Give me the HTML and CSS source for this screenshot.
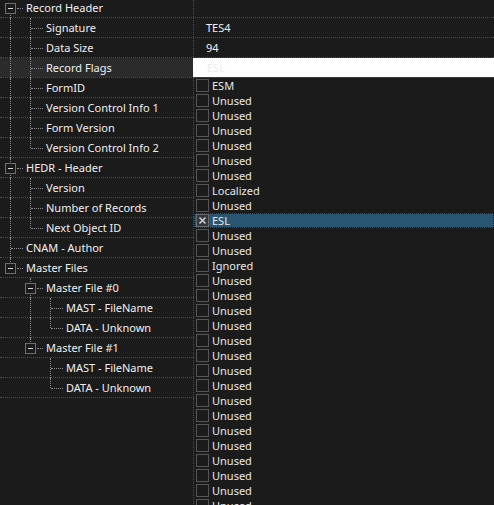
FILE: index.html
```html
<!DOCTYPE html>
<html>
<head>
<meta charset="utf-8">
<title>Record Header</title>
<link rel="stylesheet" href="styles.css">
</head>
<body>
<div class="view">
  <div class="tree">
    <div class="row"><div class="name"><span class="g tg below"><span class="box"></span></span><span class="label">Record Header</span></div><div class="value"></div></div>
    <div class="row"><div class="name"><span class="g pipe"></span><span class="g tee"></span><span class="label">Signature</span></div><div class="value">TES4</div></div>
    <div class="row"><div class="name"><span class="g pipe"></span><span class="g tee"></span><span class="label">Data Size</span></div><div class="value">94</div></div>
    <div class="row selected"><div class="name"><span class="g pipe"></span><span class="g tee"></span><span class="label">Record Flags</span></div><div class="value editing">ESL</div></div>
    <div class="row"><div class="name"><span class="g pipe"></span><span class="g tee"></span><span class="label">FormID</span></div><div class="value"></div></div>
    <div class="row"><div class="name"><span class="g pipe"></span><span class="g tee"></span><span class="label">Version Control Info 1</span></div><div class="value"></div></div>
    <div class="row"><div class="name"><span class="g pipe"></span><span class="g tee"></span><span class="label">Form Version</span></div><div class="value"></div></div>
    <div class="row"><div class="name"><span class="g pipe"></span><span class="g elbow"></span><span class="label">Version Control Info 2</span></div><div class="value"></div></div>
    <div class="row"><div class="name"><span class="g tg full"><span class="box"></span></span><span class="label">HEDR - Header</span></div><div class="value"></div></div>
    <div class="row"><div class="name"><span class="g pipe"></span><span class="g tee"></span><span class="label">Version</span></div><div class="value"></div></div>
    <div class="row"><div class="name"><span class="g pipe"></span><span class="g tee"></span><span class="label">Number of Records</span></div><div class="value"></div></div>
    <div class="row"><div class="name"><span class="g pipe"></span><span class="g elbow"></span><span class="label">Next Object ID</span></div><div class="value"></div></div>
    <div class="row"><div class="name"><span class="g tee"></span><span class="label">CNAM - Author</span></div><div class="value"></div></div>
    <div class="row"><div class="name"><span class="g tg above"><span class="box"></span></span><span class="label">Master Files</span></div><div class="value"></div></div>
    <div class="row"><div class="name"><span class="g"></span><span class="g tg full"><span class="box"></span></span><span class="label">Master File #0</span></div><div class="value"></div></div>
    <div class="row"><div class="name"><span class="g"></span><span class="g pipe"></span><span class="g tee"></span><span class="label">MAST - FileName</span></div><div class="value"></div></div>
    <div class="row"><div class="name"><span class="g"></span><span class="g pipe"></span><span class="g elbow"></span><span class="label">DATA - Unknown</span></div><div class="value"></div></div>
    <div class="row"><div class="name"><span class="g"></span><span class="g tg above"><span class="box"></span></span><span class="label">Master File #1</span></div><div class="value"></div></div>
    <div class="row"><div class="name"><span class="g"></span><span class="g"></span><span class="g tee"></span><span class="label">MAST - FileName</span></div><div class="value"></div></div>
    <div class="row"><div class="name"><span class="g"></span><span class="g"></span><span class="g elbow"></span><span class="label">DATA - Unknown</span></div><div class="value"></div></div>
    <div class="filler"><div class="name"></div></div>
  </div>

  <div class="dropdown">
    <div class="item"><span class="cb"></span><span class="txt">ESM</span></div>
    <div class="item"><span class="cb"></span><span class="txt">Unused</span></div>
    <div class="item"><span class="cb"></span><span class="txt">Unused</span></div>
    <div class="item"><span class="cb"></span><span class="txt">Unused</span></div>
    <div class="item"><span class="cb"></span><span class="txt">Unused</span></div>
    <div class="item"><span class="cb"></span><span class="txt">Unused</span></div>
    <div class="item"><span class="cb"></span><span class="txt">Unused</span></div>
    <div class="item"><span class="cb"></span><span class="txt">Localized</span></div>
    <div class="item"><span class="cb"></span><span class="txt">Unused</span></div>
    <div class="item sel"><span class="cb on"><svg width="11" height="11" viewBox="0 0 11 11"><path d="M2.5 2.5L8.5 8.5M8.5 2.5L2.5 8.5" stroke="#cfcfcf" stroke-width="1.6" fill="none"/></svg></span><span class="txt">ESL</span></div>
    <div class="item"><span class="cb"></span><span class="txt">Unused</span></div>
    <div class="item"><span class="cb"></span><span class="txt">Unused</span></div>
    <div class="item"><span class="cb"></span><span class="txt">Ignored</span></div>
    <div class="item"><span class="cb"></span><span class="txt">Unused</span></div>
    <div class="item"><span class="cb"></span><span class="txt">Unused</span></div>
    <div class="item"><span class="cb"></span><span class="txt">Unused</span></div>
    <div class="item"><span class="cb"></span><span class="txt">Unused</span></div>
    <div class="item"><span class="cb"></span><span class="txt">Unused</span></div>
    <div class="item"><span class="cb"></span><span class="txt">Unused</span></div>
    <div class="item"><span class="cb"></span><span class="txt">Unused</span></div>
    <div class="item"><span class="cb"></span><span class="txt">Unused</span></div>
    <div class="item"><span class="cb"></span><span class="txt">Unused</span></div>
    <div class="item"><span class="cb"></span><span class="txt">Unused</span></div>
    <div class="item"><span class="cb"></span><span class="txt">Unused</span></div>
    <div class="item"><span class="cb"></span><span class="txt">Unused</span></div>
    <div class="item"><span class="cb"></span><span class="txt">Unused</span></div>
    <div class="item"><span class="cb"></span><span class="txt">Unused</span></div>
    <div class="item"><span class="cb"></span><span class="txt">Unused</span></div>
    <div class="item"><span class="cb"></span><span class="txt">Unused</span></div>
  </div>
</div>
</body>
</html>
```

FILE: styles.css
```css
html, body {
  margin: 0;
  padding: 0;
  background: #1b1b1b;
}

body {
  font-family: "Noto Sans", "Liberation Sans", sans-serif;
  font-size: 11px;
  color: #f0f0f0;
  overflow: hidden;
}

.view {
  position: relative;
  width: 494px;
  height: 505px;
  overflow: hidden;
}

.tree {
  margin-top: -2px;
  display: flex;
  flex-direction: column;
}

.row {
  display: flex;
  height: 20px;
  box-sizing: border-box;
  border-bottom: 1px dotted #4c4c4c;
}

.name {
  width: 194px;
  flex: none;
  box-sizing: border-box;
  display: flex;
  align-items: stretch;
  border-right: 1px dotted #4c4c4c;
}

.filler {
  height: 120px;
  display: flex;
}

.filler .name {
  height: 100%;
}

.row.selected .name {
  background: #2b2b2b;
}

.label {
  padding-left: 6px;
  line-height: 20px;
  white-space: nowrap;
}

.value {
  flex: 1;
  padding-left: 12px;
  line-height: 20px;
  white-space: nowrap;
}

.value.editing {
  background: #ffffff;
  color: #ececec;
  margin-left: -1px;
  padding-left: 14px;
}

/* tree guide cells */
.g {
  width: 20px;
  flex: none;
  position: relative;
  display: flex;
  align-items: center;
}

.pipe::before,
.tee::before,
.elbow::before,
.tg::before {
  content: "";
  position: absolute;
  left: 10px;
  top: 0;
  height: 20px;
  border-left: 1px dotted #8a8a8a;
}

.elbow::before,
.tg.above::before {
  height: 10px;
}

.tg.below::before {
  top: 10px;
  height: 10px;
}

.tee::after,
.elbow::after,
.tg::after {
  content: "";
  position: absolute;
  left: 11px;
  top: 10px;
  width: 12px;
  border-top: 1px dotted #8a8a8a;
}

.tg::after {
  left: 17px;
  width: 6px;
}

.box {
  position: relative;
  z-index: 1;
  margin-left: 5px;
  margin-top: 1px;
  width: 11px;
  height: 11px;
  box-sizing: border-box;
  border: 1px solid #6e6e6e;
  background: #1b1b1b;
  display: flex;
  align-items: center;
  justify-content: center;
}

.box::before {
  content: "";
  width: 5px;
  height: 1px;
  background: #d8d8d8;
}

/* dropdown list */
.dropdown {
  position: absolute;
  left: 194px;
  right: 0;
  top: 77px;
  bottom: 0;
  overflow: hidden;
  background: #1b1b1b;
  border-top: 1px solid #3a3a3a;
  display: flex;
  flex-direction: column;
}

.item {
  height: 15px;
  flex: none;
  display: flex;
  align-items: center;
  box-sizing: border-box;
  padding-left: 2px;
  color: #e8e8e8;
}

.item.sel {
  background: #275572;
  outline: 1px dotted #0e0e0e;
  outline-offset: -1px;
}

.cb {
  width: 13px;
  height: 13px;
  box-sizing: border-box;
  border: 1px solid #555555;
  flex: none;
  display: flex;
  align-items: center;
  justify-content: center;
}

.cb.on {
  border-color: #6a6a6a;
  background: #333a3f;
}

.txt {
  margin-left: 3px;
  line-height: 15px;
  white-space: nowrap;
}
```
